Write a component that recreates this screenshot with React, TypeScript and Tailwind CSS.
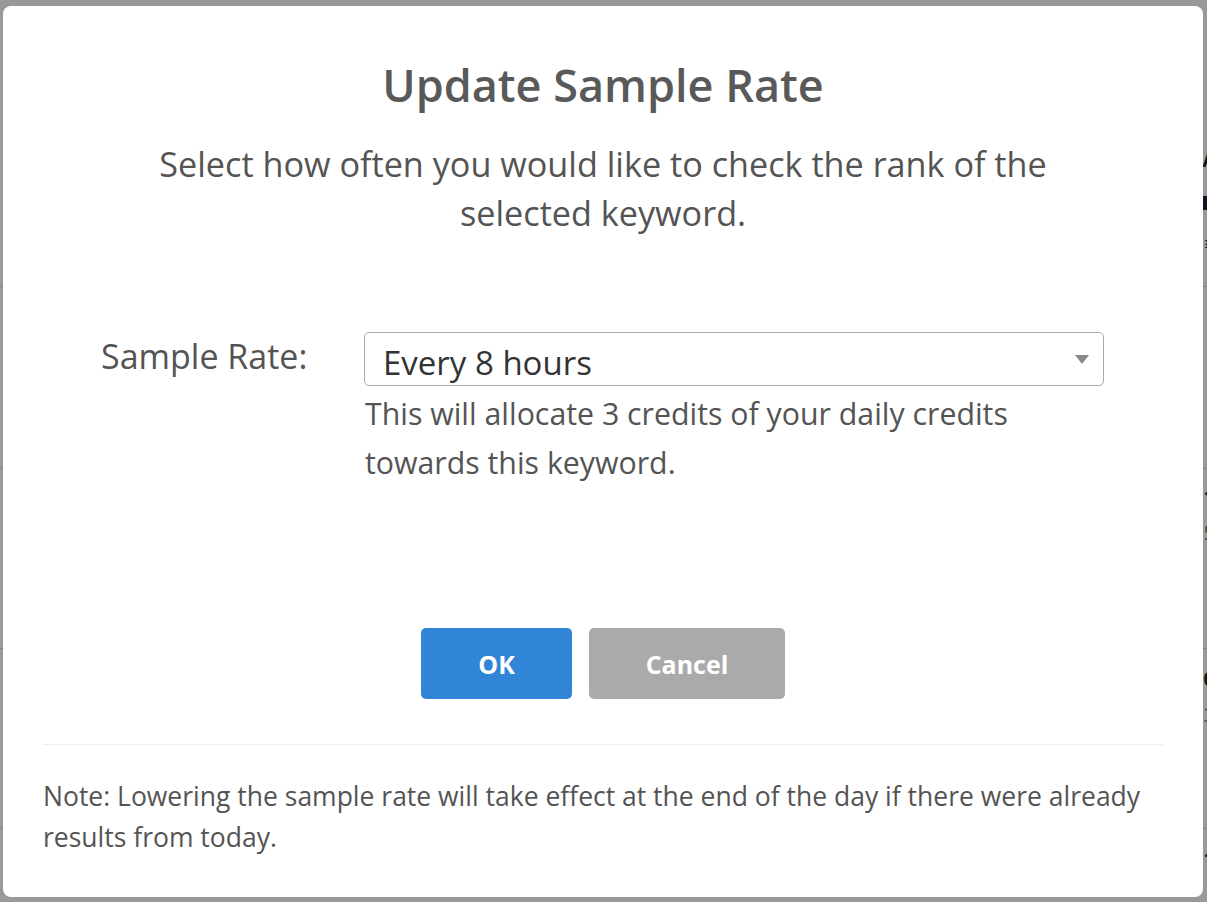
import React from 'react';

const font = { fontFamily: '"Open Sans", "Noto Sans", sans-serif' };

// rows of the page that sits behind the dialog; only a sliver shows at the edges
const rows = [
  { h: 'h-[182px]', dark: '1', green: '5' },
  { h: 'h-[180px]', dark: '0', green: '3' },
  { h: 'h-[180px]', dark: '1', green: '' },
];

const SampleRateDialog: React.FC = () => {
  return (
    <div className="absolute left-[3px] top-[6px] flex h-[891px] w-[1200px] flex-col items-center rounded-[8px] bg-white pt-[55px]">
      <h2 className="text-[45px] font-semibold leading-[48px] text-[#595959]">Update Sample Rate</h2>

      <p className="mt-[30px] text-center text-[34.2px] leading-[49px] text-[#545454]">
        Select how often you would like to check the rank of the
        <br />
        selected keyword.
      </p>

      <div className="mt-[95px] flex w-full">
        <label className="w-[361px] shrink-0 pl-[98px] text-[34px] leading-[48px] text-[#545454]">Sample Rate:</label>
        <div className="w-[740px]">
          <div className="flex h-[54px] items-center justify-between rounded-[5px] border border-[#a9a9a9] pl-[18px] pr-[14px]">
            <span className="mt-[8px] text-[33px] leading-[44px] text-[#333]">Every 8 hours</span>
            <svg width="14" height="9" viewBox="0 0 14 9">
              <path d="M0 0 L14 0 L7 9 Z" fill="#888" />
            </svg>
          </div>
          <p className="mt-[3px] pl-[1px] text-[30.3px] leading-[49px] text-[#545454]">
            This will allocate 3 credits of your daily credits
            <br />
            towards this keyword.
          </p>
        </div>
      </div>

      <div className="mt-[141px] flex gap-[17px]">
        <button
          type="button"
          className="h-[71px] w-[151px] rounded-[5px] bg-[#3085d6] pt-[2px] text-[25px] font-bold text-white"
        >
          OK
        </button>
        <button
          type="button"
          className="h-[71px] w-[196px] rounded-[5px] bg-[#aaaaaa] pt-[2px] text-[25px] font-bold text-white"
        >
          Cancel
        </button>
      </div>

      <div className="mt-[45px] h-px w-[1120px] bg-[#eeeeee]" />

      <p className="mt-[31px] w-[1120px] text-[26.5px] leading-[41px] text-[#545454]">
        Note: Lowering the sample rate will take effect at the end of the day if there were already
        <br />
        results from today.
      </p>
    </div>
  );
};

export default function App() {
  return (
    <div className="relative h-[902px] w-full overflow-hidden bg-white" style={font}>
      {/* page behind */}
      <div className="flex flex-col">
        <div className="flex h-[287px] flex-col items-end border-b border-[#dddddd] pt-[150px]">
          <span className="mr-[-8px] text-[18px] font-bold leading-[20px] text-[#222]">A</span>
          <span className="mr-[-8px] mt-[26px] h-[14px] w-[12px] bg-[#1a2340]" />
          <span className="mr-[-8px] mt-[24px] text-[18px] font-bold leading-[18px] text-[#222]">≡</span>
        </div>
        {rows.map((r, i) => (
          <div key={i} className={`flex ${r.h} flex-col items-end border-b border-[#dddddd] pt-[32px]`}>
            <span className="mr-[-9px] border-b-2 border-[#222] text-[18px] leading-[18px] text-[#222]">x</span>
            <span className="mr-[-8px] mt-[148px] text-[20px] font-bold leading-[20px] text-[#222]">{r.dark}</span>
            {r.green && <span className="mr-[-8px] mt-[16px] text-[20px] leading-[20px] text-[#2e9c4a]">{r.green}</span>}
          </div>
        ))}
        <div className="ml-[584px] mt-[60px] h-[8px] w-[52px] bg-[#1e5a9a]" />
      </div>

      {/* backdrop */}
      <div className="absolute inset-0 bg-black/40" />

      <SampleRateDialog />
    </div>
  );
}
